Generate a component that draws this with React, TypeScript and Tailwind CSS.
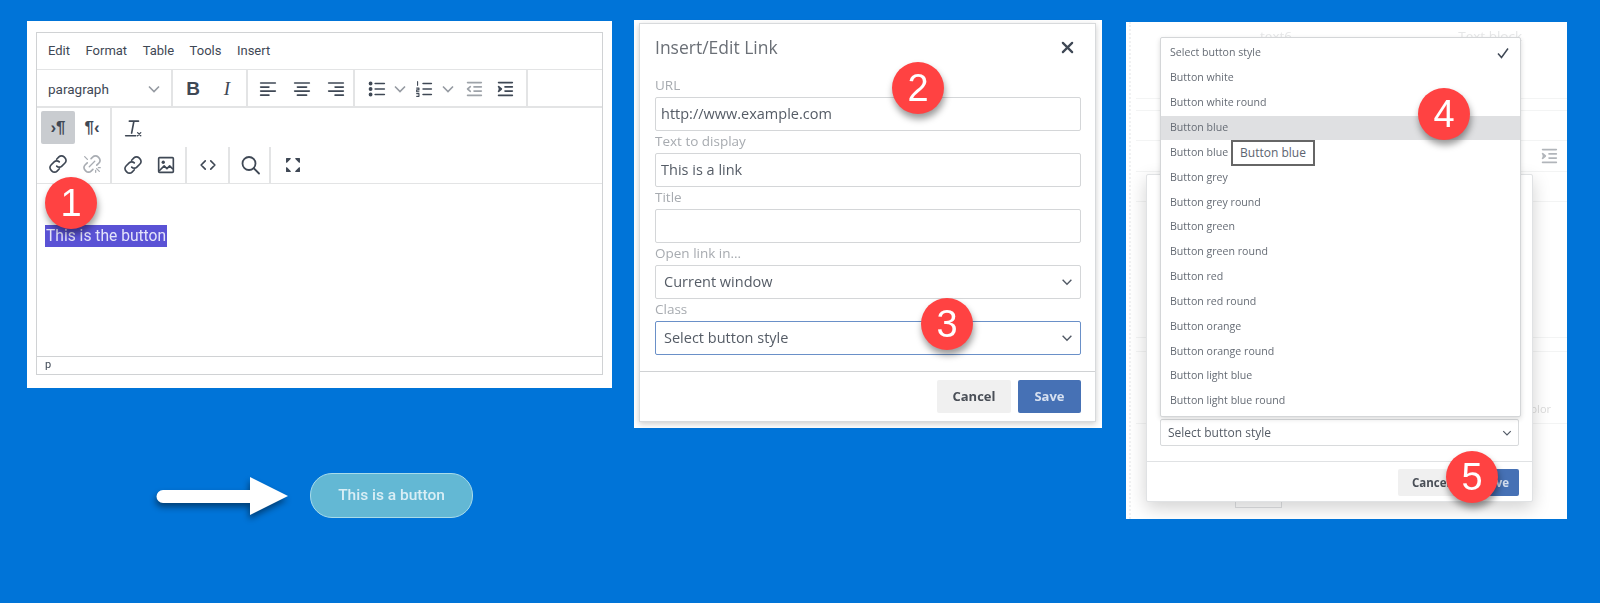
import React from "react";

const ink = "#3f4855";
const Svg = ({ children, size = 22, op = 1 }: { children: React.ReactNode; size?: number; op?: number }) => (
  <svg width={size} height={size} viewBox="0 0 24 24" fill="none" stroke={ink} strokeWidth="1.8" strokeLinecap="round" strokeLinejoin="round" opacity={op}>
    {children}
  </svg>
);

const Lines = ({ rows }: { rows: [number, number][] }) => (
  <Svg>
    {rows.map(([a, b], i) => (
      <line key={i} x1={a} x2={b} y1={5.5 + i * 4.4} y2={5.5 + i * 4.4} />
    ))}
  </Svg>
);
const AlignLeft = () => <Lines rows={[[4, 20], [4, 13], [4, 20], [4, 13]]} />;
const AlignCenter = () => <Lines rows={[[4, 20], [7, 17], [4, 20], [7, 17]]} />;
const AlignRight = () => <Lines rows={[[4, 20], [11, 20], [4, 20], [11, 20]]} />;
const Bullets = () => (
  <Svg>
    <path d="M10 6h10M10 12h10M10 18h10" />
    <circle cx="5" cy="6" r="1.2" fill={ink} />
    <circle cx="5" cy="12" r="1.2" fill={ink} />
    <circle cx="5" cy="18" r="1.2" fill={ink} />
  </Svg>
);
const Numbers = () => (
  <Svg>
    <path d="M11 6h9M11 12h9M11 18h9" />
    <path d="M5 4v4M4 11h2.5v2H4v2h2.5M4 17h2.5v3H4" strokeWidth="1.2" />
  </Svg>
);
const Indent = ({ out }: { out?: boolean }) => (
  <Svg op={out ? 0.5 : 1}>
    <path d="M5 5h15M12 9.7h8M12 14.3h8M5 19h15" />
    {out ? <path d="M8 9.5 5 12l3 2.5" /> : <path d="M5 9.5 8 12l-3 2.5" fill={ink} />}
  </Svg>
);
const Chev = ({ op = 0.55, size = 16 }: { op?: number; size?: number }) => (
  <svg width={size} height={size} viewBox="0 0 16 16" fill="none" stroke={ink} strokeWidth="1.6" opacity={op}>
    <path d="M3 5.5 8 10.5 13 5.5" />
  </svg>
);
const LinkI = ({ op = 1 }: { op?: number }) => (
  <Svg op={op}>
    <path d="M10.5 6.8 13 4.3a3.9 3.9 0 0 1 5.6 0l1 1a3.9 3.9 0 0 1 0 5.6l-3.4 3.4a3.9 3.9 0 0 1-5.6 0" />
    <path d="M13.5 17.2 11 19.7a3.9 3.9 0 0 1-5.6 0l-1-1a3.9 3.9 0 0 1 0-5.6l3.4-3.4a3.9 3.9 0 0 1 5.6 0" />
  </Svg>
);
const Unlink = () => (
  <Svg op={0.45}>
    <path d="M11 6.2 13 4.3a3.9 3.9 0 0 1 5.6 0l1 1a3.9 3.9 0 0 1 0 5.6l-2.4 2.4" />
    <path d="M13 17.8 11 19.7a3.9 3.9 0 0 1-5.6 0l-1-1a3.9 3.9 0 0 1 0-5.6l2.4-2.4" />
    <path d="M9 15l6-6M17 17l3 3M4 4l3 3M19 16h2M16 19v2" strokeWidth="1.4" />
  </Svg>
);
const ImageI = () => (
  <Svg>
    <rect x="4" y="4" width="16" height="16" rx="1" />
    <circle cx="9" cy="9" r="1.8" fill={ink} stroke="none" />
    <path d="M5 18l5-5 3 3 3-3 3 3" />
  </Svg>
);
const Code = () => (
  <Svg>
    <path d="M9 7.5 4.5 12 9 16.5M15 7.5l4.500 4.500L15 16.500" />
  </Svg>
);
const Search = () => (
  <Svg size={24}>
    <circle cx="11" cy="10.500" r="6.500" />
    <path d="m16 15.500 5 5" />
  </Svg>
);
const Full = () => (
  <Svg>
    <path d="M5 9V5h4L5 9ZM19 9V5h-4l4 4ZM5 15v4h4l-4-4ZM19 15v4h-4l4-4Z" fill={ink} strokeWidth="1.200" />
  </Svg>
);
const ClearFmt = () => (
  <Svg>
    <path d="M8 4.500h10M13 4.500l-2.500 13M4 20.500h11" />
    <path d="M17 17l3.500 3.500M20.500 17 17 20.500" strokeWidth="1.400" />
  </Svg>
);

const Btn = ({ children, w = "w-[34px]", cls = "" }: { children: React.ReactNode; w?: string; cls?: string }) => (
  <div className={`${w} h-[33px] flex items-center justify-center shrink-0 ${cls}`}>{children}</div>
);

const Badge = ({ n, pos }: { n: number; pos: string }) => (
  <div className={`absolute ${pos} w-[52px] h-[52px] rounded-full bg-[#ff4242] text-white flex items-center justify-center text-[38px] font-['Liberation_Sans',sans-serif] shadow-[1px_5px_7px_rgba(0,0,0,0.4)]`}>
    {n}
  </div>
);

const Editor = () => (
  <div className="w-[585px] h-[367px] bg-white pt-[11px] pl-[9px] font-['Roboto',sans-serif] text-[#3f4855]">
    <div className="w-[567px] h-[343px] border border-[#d0d2d4] flex flex-col">
      <div className="h-[37px] flex items-center gap-[15.500px] pl-[11px] text-[13px] border-b border-[#e3e4e5] shrink-0">
        <span>Edit</span>
        <span>Format</span>
        <span>Table</span>
        <span>Tools</span>
        <span>Insert</span>
      </div>
      <div className="h-[38px] flex items-center border-b-2 border-[#e3e4e5] shrink-0">
        <div className="w-[136px] h-full flex items-center justify-between pl-[11px] pr-[9px] pt-[2px] border-r-2 border-[#e3e4e5] text-[13.500px]">
          <span>paragraph</span>
          <Chev />
        </div>
        <div className="w-[75px] h-full flex items-center pl-[3px] pt-[2px] border-r-2 border-[#e3e4e5]">
          <Btn><span className="font-bold text-[19px] font-['Liberation_Sans',sans-serif]">B</span></Btn>
          <Btn><span className="italic text-[19px] font-['Liberation_Serif',serif]">I</span></Btn>
        </div>
        <div className="w-[107px] h-full flex items-center pl-[3px] pt-[2px] border-r-2 border-[#e3e4e5]">
          <Btn><AlignLeft /></Btn>
          <Btn><AlignCenter /></Btn>
          <Btn><AlignRight /></Btn>
        </div>
        <div className="w-[173px] h-full flex items-center pl-[10px] pt-[2px] border-r-2 border-[#e3e4e5]">
          <Btn w="w-[24px]"><Bullets /></Btn>
          <Btn w="w-[22px]"><Chev /></Btn>
          <Btn w="w-[25px]"><Numbers /></Btn>
          <Btn w="w-[24px]"><Chev /></Btn>
          <Btn w="w-[27px]"><Indent out /></Btn>
          <Btn w="w-[35px]"><Indent /></Btn>
        </div>
      </div>
      <div className="h-[76px] flex border-b border-[#e3e4e5] shrink-0">
        <div className="w-[75px] border-r-2 border-[#e3e4e5] pl-[4px] pt-[3px] flex flex-col">
          <div className="flex">
            <Btn cls="bg-[#c9ccd0] rounded-[2px] text-[17px] font-bold font-['Liberation_Sans',sans-serif]">›¶</Btn>
            <Btn cls="text-[17px] font-bold font-['Liberation_Sans',sans-serif]">¶‹</Btn>
          </div>
          <div className="flex mt-[3px]">
            <Btn><LinkI /></Btn>
            <Btn><Unlink /></Btn>
          </div>
        </div>
        <div className="flex flex-col flex-1 pt-[3px]">
          <Btn w="w-[42px]"><ClearFmt /></Btn>
          <div className="flex mt-[3px] h-[37px] items-stretch">
            <div className="w-[75px] flex items-center pl-[3px] border-r-2 border-[#e3e4e5]">
              <Btn w="w-[36px]"><LinkI /></Btn>
              <Btn w="w-[30px]"><ImageI /></Btn>
            </div>
            <div className="w-[43px] flex items-center justify-center border-r-2 border-[#e3e4e5]"><Code /></div>
            <div className="w-[41px] flex items-center justify-center border-r-2 border-[#e3e4e5]"><Search /></div>
            <div className="w-[44px] flex items-center justify-center"><Full /></div>
          </div>
        </div>
      </div>
      <div className="flex-1 pl-[8px] pt-[40px]">
        <span className="inline-block bg-[#5a52d5] text-[#e4e4fa] text-[15.600px] leading-[22px] px-[1px]">This is the button</span>
      </div>
      <div className="h-[18px] border-t border-[#d0d2d4] pl-[8px] text-[11px] leading-[16px] shrink-0">p</div>
    </div>
  </div>
);

const Field = ({ label, value, select, focus }: { label: string; value?: string; select?: boolean; focus?: boolean }) => (
  <div className="h-[56px] flex flex-col shrink-0">
    <div className="h-[21.500px] text-[#a7abb0] text-[13.500px] leading-[20px]">{label}</div>
    <div className={`h-[34.500px] rounded-[2px] border flex items-center justify-between text-[#555c66] text-[14.500px] ${select ? "pl-[8px] pr-[6px]" : "pl-[5px]"} ${focus ? "border-[#6a90c8]" : "border-[#d4d6d8]"}`}>
      <span>{value}</span>
      {select && <Chev op={0.9} size={14} />}
    </div>
  </div>
);

const LinkDialog = () => (
  <div className="w-[468px] h-[408px] bg-white pt-[3px] pl-[5px] font-['Open_Sans',sans-serif]">
    <div className="w-[457px] h-[399px] border border-[#d8dadc] shadow-[0_2px_6px_rgba(0,0,0,0.2)] flex flex-col">
      <div className="h-[47px] shrink-0 flex items-center justify-between pl-[15px] pr-[21px] text-[#6a6f76] text-[17.500px]">
        <span>Insert/Edit Link</span>
        <svg width="13" height="13" viewBox="0 0 14 14" stroke="#3f4855" strokeWidth="2.400" strokeLinecap="round"><path d="M2 2l10 10M12 2 2 12" /></svg>
      </div>
      <div className="flex-1 pl-[15px] pr-[14px] pt-[4px]">
        <Field label="URL" value="http://www.example.com" />
        <Field label="Text to display" value="This is a link" />
        <Field label="Title" />
        <Field label="Open link in..." value="Current window" select />
        <Field label="Class" value="Select button style" select focus />
      </div>
      <div className="h-[50px] shrink-0 border-t border-[#d0d2d4] flex justify-end gap-[7px] pt-[8px] pr-[14px]">
        <div className="w-[74px] h-[33px] rounded-[2px] bg-[#f0f0f0] flex items-center justify-center font-bold text-[13px] text-[#4a4f57]">Cancel</div>
        <div className="w-[63px] h-[33px] rounded-[2px] bg-[#4671b5] flex items-center justify-center font-bold text-[13px] text-[#d6e0f0]">Save</div>
      </div>
    </div>
  </div>
);

const items = ["Select button style", "Button white", "Button white round", "Button blue", "Button blue round", "Button grey", "Button grey round", "Button green", "Button green round", "Button red", "Button red round", "Button orange", "Button orange round", "Button light blue", "Button light blue round"];

const StylePanel = () => (
  <div className="relative w-[441px] h-[497px] bg-white font-['Open_Sans',sans-serif] overflow-hidden">
    <div className="absolute inset-0 flex flex-col text-[#e6e7e8] pl-[5px] ml-[3px] border-l-2 border-dotted border-[#f0f1f2]">
      <div className="h-[24px] flex items-end justify-between pl-[124px] pr-[45px] text-[13.500px]">
        <span>text6</span>
        <span>Text block</span>
      </div>
      <div className="mt-[52px] h-[13px] border-y border-[#f3f4f4]" />
      <div className="mt-[29px] h-[32px] border-y border-[#f3f4f4] flex justify-end items-center pr-[7px]"><span className="opacity-40"><Indent /></span></div>
      <div className="mt-[29px] h-[1px] bg-[#f3f4f4]" />
      <div className="mt-[135px] h-[15px] border-y border-[#f3f4f4]" />
      <div className="mt-[9px] h-[63px] border-b border-[#f3f4f4] flex justify-end items-end pr-[16px] pb-[6px] text-[11px] text-[#dcdcdc]">olor</div>
    </div>
    <div className="absolute left-[109px] top-[479px] w-[47px] h-[7px] border border-[#e0e2e4]" />
    <div className="relative mt-[152px] ml-[20px] w-[387px] h-[328px] bg-white rounded-[2px] border border-[#e0e2e4] shadow-[0_6px_18px_rgba(0,0,0,0.18)] flex flex-col justify-end">
      <div className="mx-[13px] mb-[15px] h-[27px] rounded-[2px] border border-[#d8dadc] flex items-center justify-between pl-[7px] pr-[5px] text-[12px] text-[#555c66]">
        <span>Select button style</span>
        <Chev op={0.9} size={12} />
      </div>
      <div className="h-[40px] border-t border-[#e0e2e4] flex justify-end gap-[7px] pt-[7px] pr-[13px]">
        <div className="w-[74px] h-[27px] rounded-[2px] bg-[#f0f0f0] flex items-center pl-[14px] font-bold text-[11.500px] text-[#4a4f57]">Cancel</div>
        <div className="w-[40px] h-[27px] rounded-[2px] bg-[#4671b5] flex items-center justify-end pr-[10px] font-bold text-[11.500px] text-[#d6e0f0]">ve</div>
      </div>
    </div>
    <div className="absolute left-[34px] top-[15px] w-[361px] h-[380px] bg-white border border-[#d4d6d8] rounded-[2px] shadow-[0_2px_5px_rgba(0,0,0,0.15)] pt-[3px] text-[10.600px] text-[#666c75]">
      {items.map((t, i) => (
        <div key={t} className={`h-[24.850px] flex items-center justify-between pl-[9px] pr-[10px] ${i === 3 ? "bg-[#dfe0e2]" : ""}`}>
          <span>{t}</span>
          {i === 0 && (
            <svg width="14" height="14" viewBox="0 0 14 14" fill="none" stroke="#3f4855" strokeWidth="1.500"><path d="M2 7.500 5.500 11.500 12 2.500" /></svg>
          )}
        </div>
      ))}
    </div>
    <div className="absolute left-[105px] top-[118px] w-[84px] h-[26px] bg-white border-2 border-[#666] flex items-center justify-center text-[12px] text-[#5c6470]">Button blue</div>
  </div>
);

export default function App() {
  return (
    <div className="w-[1600px] h-[603px] bg-[#0074d8] overflow-hidden">
      <div className="relative w-full h-full flex items-start blur-[0.4px]">
        <div className="ml-[27px] mt-[21px] w-[585px] flex flex-col">
          <Editor />
          <div className="mt-[85px] ml-[130px] flex items-center gap-[22px]">
            <svg width="131" height="38" viewBox="0 0 131 38" className="overflow-visible" style={{ filter: "drop-shadow(-1px 4px 3px rgba(0,0,0,0.45))" }}>
              <path d="M6 13h87V0l38 19-38 19V26H6a6.500 6.500 0 0 1 0-13Z" fill="#fff" />
            </svg>
            <div className="w-[163px] h-[45px] rounded-[22px] bg-[#63b8d4] border border-[#a8dcea] flex items-center justify-center text-[15.500px] font-medium text-[#d9eef5] font-['Roboto',sans-serif]">This is a button</div>
          </div>
        </div>
        <div className="ml-[22px] mt-[20px]"><LinkDialog /></div>
        <div className="ml-[24px] mt-[22px]"><StylePanel /></div>
        <Badge n={1} pos="left-[45px] top-[177px]" />
        <Badge n={2} pos="left-[892px] top-[62px]" />
        <Badge n={3} pos="left-[921px] top-[298px]" />
        <Badge n={4} pos="left-[1418px] top-[88px]" />
        <Badge n={5} pos="left-[1446px] top-[451px]" />
      </div>
    </div>
  );
}
